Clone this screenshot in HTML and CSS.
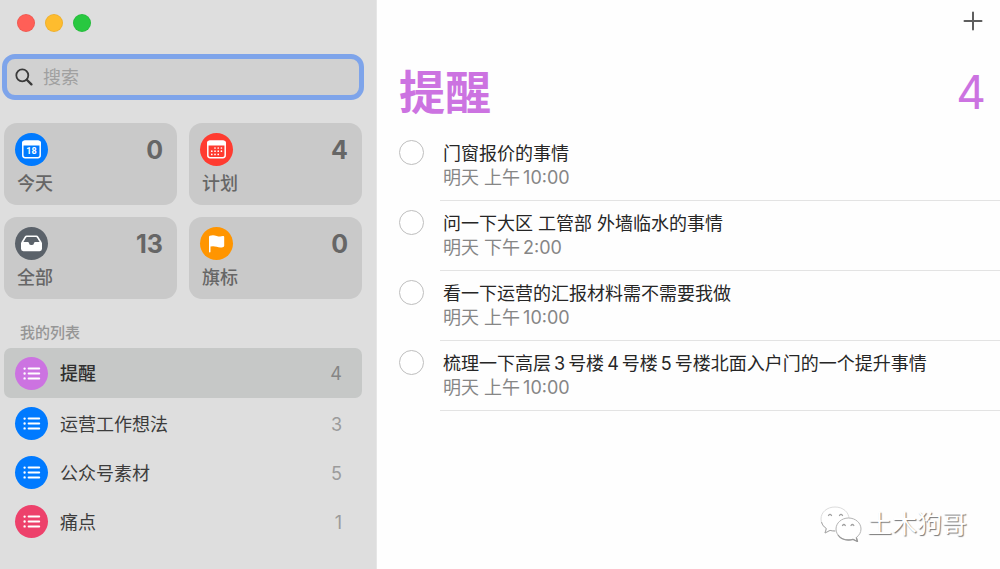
FILE: index.html
```html
<!DOCTYPE html>
<html lang="zh-CN">
<head>
<meta charset="utf-8">
<meta name="viewport" content="width=device-width, initial-scale=1">
<title>提醒</title>
<link rel="stylesheet" href="styles.css">
</head>
<body>
<svg class="defs" width="0" height="0" aria-hidden="true">
  <symbol id="list" viewBox="0 0 33 33">
    <g stroke="#fff" stroke-width="2" stroke-linecap="round">
      <path d="M13.6 11.6h10.6M13.6 16.500h10.6M13.6 21.400h10.6"/>
      <path stroke-width="2.400" d="M9.600 11.600h.01M9.600 16.500h.01M9.600 21.400h.01"/>
    </g>
  </symbol>
</svg>
<div class="app">
  <aside class="sidebar">
    <div class="lights">
      <button class="light close" aria-label="关闭"></button>
      <button class="light minimize" aria-label="最小化"></button>
      <button class="light maximize" aria-label="全屏"></button>
    </div>
    <label class="search">
      <svg width="18" height="18" viewBox="0 0 18 18" fill="none" stroke="#3a3a3a" stroke-linecap="round" aria-hidden="true">
        <circle cx="7.3" cy="7.3" r="6" stroke-width="1.8"/><path d="M11.8 11.8l4.6 4.6" stroke-width="2.3"/>
      </svg>
      <input type="search" placeholder="搜索" aria-label="搜索">
    </label>
    <div class="cards">
      <button class="card">
        <span class="card-top">
          <svg class="disc blue" viewBox="0 0 33 33" aria-hidden="true">
            <rect x="7.8" y="8.3" width="17.4" height="16.4" rx="2.4" fill="none" stroke="#fff" stroke-width="1.5"/>
            <path d="M7.1 12.4V10.2a2.6 2.6 0 0 1 2.6-2.6h13.6a2.6 2.6 0 0 1 2.6 2.6v2.2z" fill="#fff"/>
            <text x="16.5" y="20.800" class="day">18</text>
          </svg>
          <span class="total">0</span>
        </span>
        <span class="card-name">今天</span>
      </button>
      <button class="card">
        <span class="card-top">
          <svg class="disc red" viewBox="0 0 33 33" aria-hidden="true">
            <rect x="7.8" y="8.3" width="17.4" height="16.4" rx="2.4" fill="none" stroke="#fff" stroke-width="1.5"/>
            <path d="M7.1 12.4V10.2a2.6 2.6 0 0 1 2.6-2.6h13.6a2.6 2.6 0 0 1 2.6 2.6v2.2z" fill="#fff"/>
            <g stroke="#fff" stroke-width="1.700" stroke-linecap="round" stroke-dasharray="0.01 3.2">
              <path d="M15 15h6.5M11.8 18.2h9.7M11.8 21.4h6.5"/>
            </g>
          </svg>
          <span class="total">4</span>
        </span>
        <span class="card-name">计划</span>
      </button>
      <button class="card">
        <span class="card-top">
          <svg class="disc slate" viewBox="0 0 33 33" aria-hidden="true">
            <path fill="#fff" fill-rule="evenodd" d="M11.6 8.6h9.8q1.2 0 1.8 1l3.2 5.2q.6.9.6 1.8v5.2q0 2.4-2.4 2.4H8.4Q6 24.200 6 21.800v-5.200q0-.9.6-1.8l3.200-5.200q.6-1 1.8-1zM12 10.100q-.6 0-.9.5L8.400 15h4.500q.9 0 1 .9.400 2.200 2.600 2.200t2.600-2.200q.1-.9 1-.9h4.500l-2.700-4.400q-.3-.5-.9-.5z"/>
          </svg>
          <span class="total">13</span>
        </span>
        <span class="card-name">全部</span>
      </button>
      <button class="card">
        <span class="card-top">
          <svg class="disc orange" viewBox="0 0 33 33" aria-hidden="true">
            <path fill="#fff" d="M9 9.800q0-.8.8-1.100 3.400-1.100 6.900.2 3 1.100 6.200.2 1.300-.3 1.300.8v8.900q0 .8-.8 1.100-3.200 1.100-6.700-.1-3.200-1.100-6.200-.3v5.300q0 .8-.75.8T9 24.800z"/>
          </svg>
          <span class="total">0</span>
        </span>
        <span class="card-name">旗标</span>
      </button>
    </div>
    <h2 class="group">我的列表</h2>
    <nav class="lists">
      <a class="list selected" href="#reminders" aria-current="page"><svg class="disc purple" aria-hidden="true"><use href="#list"/></svg><span class="list-name">提醒</span><span class="count">4</span></a>
      <a class="list" href="#ideas"><svg class="disc blue" aria-hidden="true"><use href="#list"/></svg><span class="list-name">运营工作想法</span><span class="count">3</span></a>
      <a class="list" href="#material"><svg class="disc blue" aria-hidden="true"><use href="#list"/></svg><span class="list-name">公众号素材</span><span class="count">5</span></a>
      <a class="list" href="#pain"><svg class="disc pink" aria-hidden="true"><use href="#list"/></svg><span class="list-name">痛点</span><span class="count">1</span></a>
    </nav>
  </aside>
  <main class="main">
    <div class="toolbar">
      <button class="add" aria-label="添加提醒">
        <svg width="20" height="20" viewBox="0 0 20 20" stroke="#5e5e5e" stroke-width="2" stroke-linecap="round" aria-hidden="true"><path d="M10 1.500v17M1.500 10h17"/></svg>
      </button>
    </div>
    <header class="heading"><h1>提醒</h1><span class="heading-count">4</span></header>
    <ul class="tasks">
      <li class="task"><input type="checkbox" id="t1"><div class="task-text"><label for="t1">门窗报价的事情</label><span class="due">明天 上午<span class="time">10:00</span></span></div></li>
      <li class="task"><input type="checkbox" id="t2"><div class="task-text"><label for="t2">问一下大区 工管部 外墙临水的事情</label><span class="due">明天 下午<span class="time">2:00</span></span></div></li>
      <li class="task"><input type="checkbox" id="t3"><div class="task-text"><label for="t3">看一下运营的汇报材料需不需要我做</label><span class="due">明天 上午<span class="time">10:00</span></span></div></li>
      <li class="task"><input type="checkbox" id="t4"><div class="task-text"><label for="t4">梳理一下高层<span class="num">3</span>号楼<span class="num">4</span>号楼<span class="num">5</span>号楼北面入户门的一个提升事情</label><span class="due">明天 上午<span class="time">10:00</span></span></div></li>
    </ul>
  </main>
  <div class="watermark">
    <svg width="42" height="36" viewBox="0 0 42 36" aria-hidden="true">
      <g fill="#fff" stroke-linejoin="round">
        <path stroke="#dcdcdc" d="M15 1C7 1 1 6.200 1 13c0 4 2 7.300 5.300 9.500L5 27l5-2.600c1.700.4 3.300.6 5 .6 8 0 14-5.200 14-12S23 1 15 1z"/>
        <path fill="none" stroke="#a8a8a8" d="M1.500 16c.7 2.700 2.400 4.900 4.800 6.500L5 27l5-2.600c1.700.4 3.300.6 5 .6"/>
        <path stroke="#b4b4b4" d="M28.500 12C21.500 12 16 17 16 23s5.500 11 12.500 11c1.600 0 3.100-.2 4.500-.7l4.500 2.200-1.200-4C39.200 29.400 41 26.400 41 23c0-6-5.500-11-12.500-11z"/>
        <path fill="none" stroke="#999" stroke-width="1.300" d="M18 29c2 3 6 5 10.500 5 1.600 0 3.100-.2 4.500-.7l4.500 2.200-1.200-4"/>
      </g>
      <g fill="none" stroke="#a0a0a0" stroke-width="1.300" stroke-linecap="round">
        <path d="M8.500 9.500q1.500-2.200 3 0M19.500 9.500q1.500-2.200 3 0M22.500 19.500q1.400-2 2.800 0M31 19.500q1.400-2 2.800 0"/>
      </g>
    </svg>
    <span>土木狗哥</span>
  </div>
</div>
</body>
</html>
```
FILE: styles.css
```css
* { box-sizing: border-box; }

body {
  margin: 0;
  font-family: Inter, "Noto Sans CJK SC", sans-serif;
  font-size: 18px;
  line-height: 24px;
  color: #262626;
  background: #fefefe;
}

button {
  border: 0;
  padding: 0;
  font: inherit;
  color: inherit;
  background: none;
}

h1, h2, ul { margin: 0; padding: 0; }

.defs { position: absolute; }

.app {
  position: relative;
  display: flex;
  min-height: 100vh;
}

/* Sidebar */
.sidebar {
  flex: 0 0 377px;
  padding: 14px 12px 16px 2px;
  background: #dedede;
  border-right: 1px solid #e6e6e6;
}

.lights {
  display: flex;
  gap: 10px;
  padding-left: 15px;
}

.light {
  width: 18px;
  height: 18px;
  border: 1px solid rgba(0, 0, 0, .06);
  border-radius: 50%;
}

.close { background: #ff5f57; }
.minimize { background: #febc2e; }
.maximize { background: #28c840; }

.search {
  display: flex;
  align-items: center;
  gap: 10px;
  height: 46px;
  margin-top: 22px;
  padding: 0 8px;
  background: #d1d1d1;
  border: 5px solid #7ea4ea;
  border-radius: 13px;
}

.search input {
  flex: 1;
  min-width: 0;
  padding: 2px 0 0;
  border: 0;
  outline: 0;
  font: inherit;
  background: none;
}

.search input::placeholder { color: #a0a0a0; }

.cards {
  display: grid;
  grid-template-columns: 1fr 1fr;
  gap: 12px;
  margin: 23px 2px 0;
}

.card {
  display: flex;
  flex-direction: column;
  height: 82px;
  padding: 10px 14px 8px 11px;
  border-radius: 13px;
  color: #666;
  text-align: left;
  background: #c9c9c9;
}

.card-top {
  display: flex;
  justify-content: space-between;
  align-items: center;
  width: 100%;
}

.disc {
  flex: none;
  width: 33px;
  height: 33px;
  border-radius: 50%;
}

.blue { background: #007aff; }
.red { background: #ff3b30; }
.slate { background: #5b626a; }
.orange { background: #ff9500; }
.purple { background: #cc73e1; }
.pink { background: #ed416b; }

.day {
  font-family: Roboto, sans-serif;
  font-size: 9px;
  font-weight: 700;
  fill: #fff;
  text-anchor: middle;
}

.total {
  font-size: 25px;
  font-weight: 700;
}

.card-name {
  padding: 6px 0 0 2px;
  font-weight: 500;
}

.group {
  margin: 22px 0 3px 18px;
  font-size: 15px;
  font-weight: 500;
  color: #969696;
}

.lists { padding: 0 2px; }

.list {
  display: flex;
  align-items: center;
  gap: 12px;
  height: 49px;
  padding: 0 20px 0 11px;
  border-radius: 7px;
  color: #3c3c3c;
  text-decoration: none;
}

.selected {
  height: 50px;
  margin-bottom: 1px;
  color: #303030;
  background: #c6c8c7;
}

.list-name {
  flex: 1;
  padding-top: 2px;
}

.selected .list-name { font-weight: 500; }

.count {
  padding-top: 2px;
  color: #9b9b9b;
}

.selected .count { color: #858585; }

/* Reminders */
.main {
  flex: 1;
  min-width: 0;
  padding: 7px 0 0 22px;
}

.toolbar {
  display: flex;
  justify-content: flex-end;
  padding-right: 13px;
}

.add {
  display: grid;
  place-items: center;
  width: 28px;
  height: 28px;
}

.heading {
  display: flex;
  justify-content: space-between;
  align-items: center;
  padding: 29px 14px 0 0;
  font-size: 46px;
  line-height: 56px;
  color: #cc73e1;
}

h1 {
  font-size: inherit;
  font-weight: 700;
}

.tasks {
  margin-top: 11px;
  list-style: none;
}

.task {
  display: flex;
  gap: 16px;
}

.task input {
  flex: none;
  appearance: none;
  width: 25px;
  height: 25px;
  margin: 9px 0 0;
  border: 1px solid #bebebe;
  border-radius: 50%;
  background: #fff;
}

.task-text {
  flex: 1;
  display: flex;
  flex-direction: column;
  min-width: 0;
  padding: 11px 0 10px 3px;
  border-bottom: 1px solid #e3e3e3;
}

.due { color: #868686; }
.time { margin-left: 3px; }
.num { margin: 0 3px; }

.watermark {
  position: absolute;
  right: 33px;
  bottom: 27px;
  display: flex;
  align-items: center;
  gap: 5px;
  font-size: 25px;
  line-height: 34px;
  color: #fff;
  text-shadow: 1px 1px 1px #777;
}
```
